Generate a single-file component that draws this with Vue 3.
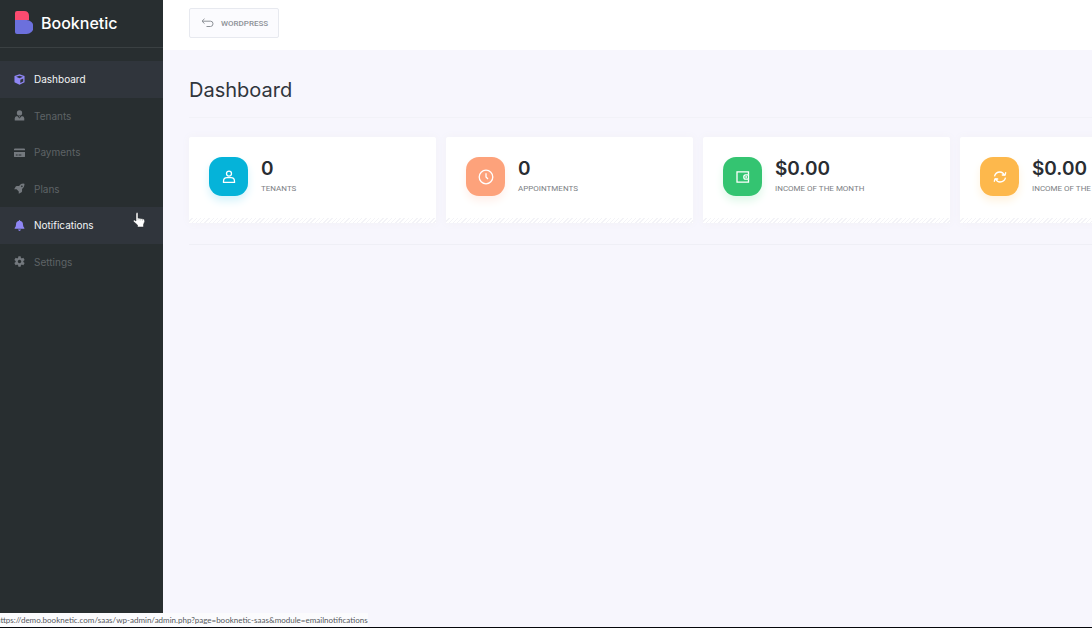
<script setup>
const nav = [
  { id: 'dashboard', label: 'Dashboard', active: true },
  { id: 'tenants', label: 'Tenants' },
  { id: 'payments', label: 'Payments' },
  { id: 'plans', label: 'Plans' },
  { id: 'notifications', label: 'Notifications', active: true },
  { id: 'settings', label: 'Settings' },
]
const cards = [
  { id: 'tenants', value: '0', label: 'TENANTS' },
  { id: 'appointments', value: '0', label: 'APPOINTMENTS' },
  { id: 'month', value: '$0.00', label: 'INCOME OF THE MONTH' },
  { id: 'year', value: '$0.00', label: 'INCOME OF THE YEAR' },
]
</script>

<template>
  <div class="app">
    <aside class="sidebar">
      <a class="brand" href="#">
        <svg class="logo" viewBox="0 0 18 23" aria-hidden="true">
          <path d="M0 9V2Q0 0 2 0H9Q14 0 14 5V9Z" fill="#fb4b70" />
          <path d="M0 9H11.500A6.800 6.800 0 0 1 11.500 23H2Q0 23 0 21Z" fill="#6c70dc" />
        </svg>
        <span>Booknetic</span>
      </a>
      <nav class="nav">
        <a v-for="item in nav" :key="item.id" href="#" class="nav-item" :class="{ active: item.active }">
          <svg class="nav-icon" viewBox="0 0 12 12" fill="currentColor" aria-hidden="true">
            <template v-if="item.id === 'dashboard'">
              <path d="M6 .3 11.500 2.300V9L6 11.800.5 9V2.300Z" />
              <path d="M2.300 3.100 6 1.800 9.700 3.100 6 4.600Z" fill="#30353c" />
              <path d="M6.900 6.200 10.100 4.800V8.200L6.900 9.900Z" fill="#30353c" />
            </template>
            <template v-else-if="item.id === 'tenants'">
              <circle cx="6" cy="3.200" r="2.900" />
              <path d="M.8 11.500V9Q.8 6.800 3.500 6.600L6 9.300 8.500 6.600Q11.200 6.800 11.200 9V11.500Z" />
              <path d="M6 6.600 6.800 7.400 6 8.200 5.200 7.400Z" />
            </template>
            <path v-else-if="item.id === 'payments'" fill-rule="evenodd" d="M1 1.500H11Q12 1.500 12 2.500V3.500H0V2.500Q0 1.500 1 1.500ZM0 5.500H12V10Q12 11 11 11H1Q0 11 0 10ZM2 8.300V9.200H4V8.300ZM5 8.300V9.200H8V8.300Z" />
            <path v-else-if="item.id === 'plans'" fill-rule="evenodd" d="M11.300.8Q8-.1 5.500 3.200H3Q2.300 3.200 1.900 3.800L.2 6.800H2.800L5.200 9.200V11.800L8.200 10.100Q8.800 9.700 8.800 9V6.500Q12 4.200 11.300.8ZM8.600 2.600A.9.900 0 1 1 8.590 2.600Z" />
            <path v-else-if="item.id === 'notifications'" d="M5.500 0H6.500V.9Q9.800 1.500 9.800 5Q9.800 7.500 11.300 8.600V9.600H.7V8.600Q2.200 7.500 2.200 5Q2.200 1.500 5.500.9ZM4.400 10.300H7.600Q7.200 11.900 6 11.900T4.400 10.300Z" />
            <path v-else fill-rule="evenodd" d="M4.800.4H7.200L7.500 2 8.500 2.700 10.200 2 11.600 4.400 10.200 5.400V6.600L11.600 7.600 10.200 10 8.500 9.300 7.500 10 7.200 11.600H4.800L4.500 10 3.500 9.300 1.800 10 .4 7.600 1.800 6.600V5.400L.4 4.400 1.800 2 3.500 2.700 4.500 2ZM6 4.100A1.900 1.900 0 1 0 6.010 4.100Z" />
          </svg>
          <span>{{ item.label }}</span>
        </a>
      </nav>
    </aside>

    <main class="main">
      <header class="topbar">
        <button class="back" type="button">
          <svg class="back-icon" viewBox="0 0 13 10" fill="none" stroke="currentColor" aria-hidden="true">
            <path d="M3.500.8 1 3.200 3.500 5.600M1 3.200H9.500Q12 3.200 12 5.800T9.500 8.500H5.500" />
          </svg>
          WORDPRESS
        </button>
      </header>
      <section class="content">
        <h1>Dashboard</h1>
        <div class="cards">
          <article v-for="card in cards" :key="card.id" class="card">
            <div class="tile" :class="card.id">
              <svg viewBox="0 0 16 16" fill="none" stroke="#fff" stroke-width="1.300" aria-hidden="true">
                <template v-if="card.id === 'tenants'">
                  <circle cx="8" cy="4.600" r="2.500" />
                  <path d="M2.500 13.300V12.300Q2.500 8.700 6 8.700H10Q13.500 8.700 13.500 12.300V13.300Z" />
                </template>
                <template v-else-if="card.id === 'appointments'">
                  <circle cx="8" cy="8" r="6.800" />
                  <path d="M8 4.200V8L10 10" />
                </template>
                <template v-else-if="card.id === 'month'">
                  <path d="M13.500 5.500V2.800H2V13.200H13.500V10.500" />
                  <path d="M13.500 5.800H10.500Q8.800 5.800 8.800 8T10.500 10.200H13.500Z" />
                  <circle cx="11.200" cy="8" r=".3" />
                </template>
                <template v-else>
                  <path d="M2.500 7.300Q3.500 3 8 3 11 3 12.500 6.500M13.500 8.700Q12.500 13 8 13 5 13 3.500 9.500" />
                  <path d="M9.800 6H13M13.800 3.300 12.900 6.500M6.200 10H3M2.200 12.700 3.100 9.500" />
                </template>
              </svg>
            </div>
            <div class="stat">
              <strong>{{ card.value }}</strong>
              <span>{{ card.label }}</span>
            </div>
          </article>
        </div>
      </section>
    </main>

    <svg class="pointer" viewBox="0 0 12 16" aria-hidden="true">
      <path d="M3 1Q4.500 0 5 1.500V6L10.500 7Q12 7.500 11.700 9.500L10.500 12.500V15H4.500V13L.5 9.500Q0 8 1.300 8L3 9Z" fill="#fff" stroke="#20272a" stroke-width=".5" />
      <path d="M5 6V8.200M7.200 6.500V8.500M9.400 6.900V8.800" stroke="#8b9092" stroke-width=".5" />
    </svg>
    <div class="status">https://demo.booknetic.com/saas/wp-admin/admin.php?page=booknetic-saas&amp;module=emailnotifications</div>
  </div>
</template>

<style>
body {
  margin: 0;
  overflow: hidden;
}
</style>

<style scoped>
* {
  box-sizing: border-box;
}
.app {
  position: relative;
  display: flex;
  min-height: 100vh;
  overflow: hidden;
  border-bottom: 1px solid #05070b;
  background: #f7f6fd;
  font-family: Inter, "Open Sans", sans-serif;
}
.sidebar {
  flex: 0 0 163px;
  background: #282e30;
}
.brand {
  display: flex;
  align-items: center;
  gap: 8px;
  height: 48px;
  padding: 0 0 2px 15px;
  border-bottom: 1px solid #3a4042;
  color: #fff;
  font-size: 16px;
  font-weight: 500;
  text-decoration: none;
}
.logo {
  width: 18px;
  height: 23px;
}
.nav {
  display: grid;
  grid-template-rows: repeat(6, 1fr);
  height: 232px;
  padding-top: 13px;
}
.nav-item {
  display: flex;
  align-items: center;
  gap: 9px;
  padding-left: 14px;
  color: #5e6366;
  font-size: 10px;
  text-decoration: none;
}
.nav-item.active {
  background: #30353c;
  color: #f4f5f7;
}
.nav-icon {
  width: 11px;
  height: 11px;
  color: #74797e;
}
.active .nav-icon {
  color: #8f86f5;
}
.main {
  flex: 1;
  min-width: 0;
}
.topbar {
  display: flex;
  align-items: flex-start;
  height: 50px;
  padding: 8px 26px;
  background: #fff;
}
.back {
  display: flex;
  align-items: center;
  gap: 7px;
  height: 30px;
  padding: 0 10px 0 11px;
  border: 1px solid #e7e9ef;
  border-radius: 2px;
  background: #fbfbfe;
  color: #8c9096;
  font-family: Roboto, sans-serif;
  font-size: 8px;
  font-weight: 500;
}
.back-icon {
  width: 13px;
  height: 10px;
}
.content {
  padding: 26px 0 0 26px;
}
h1 {
  margin: 0;
  padding-bottom: 13px;
  border-bottom: 1px solid #f2f2f8;
  color: #30353c;
  font-size: 20px;
  font-weight: 400;
  line-height: 28px;
}
.cards {
  display: grid;
  grid-template-columns: repeat(4, minmax(247px, 1fr));
  gap: 10px;
  padding: 19px 0 21px;
  border-bottom: 1px solid #efeff6;
}
.card {
  position: relative;
  display: flex;
  gap: 13px;
  height: 86px;
  padding: 20px;
  border-radius: 2px;
  background: #fff;
  box-shadow: 0 0 8px #f2f1f7;
}
.card::after {
  position: absolute;
  right: 0;
  bottom: 0;
  left: 0;
  height: 5px;
  background: repeating-linear-gradient(135deg, #fff 0 2px, #f3f3f7 2px 3px);
  content: "";
}
.tile {
  display: flex;
  align-items: center;
  justify-content: center;
  width: 39px;
  height: 39px;
  border-radius: 13px;
}
.tile svg {
  width: 16px;
  height: 16px;
}
.tile.tenants {
  background: #05b3d9;
  box-shadow: 0 5px 9px #d5f3fb;
}
.tile.appointments {
  background: #fda27b;
  box-shadow: 0 5px 9px #fff0ea;
}
.tile.month {
  background: #34c471;
  box-shadow: 0 5px 9px #dff8e9;
}
.tile.year {
  background: #fdb84c;
  box-shadow: 0 5px 9px #fff3df;
}
.stat {
  display: flex;
  flex-direction: column;
  white-space: nowrap;
}
.stat strong {
  color: #292d32;
  font-size: 19px;
  font-weight: 600;
  line-height: 24px;
}
.stat span {
  color: #7c8084;
  font-family: Roboto, sans-serif;
  font-size: 8px;
  line-height: 16px;
}
.pointer {
  position: absolute;
  top: 212px;
  left: 133px;
  width: 12px;
  height: 16px;
}
.status {
  position: absolute;
  bottom: 0;
  left: 0;
  overflow: hidden;
  background: #fbfbfd;
  color: #55585c;
  font-family: Lato, "Open Sans", sans-serif;
  font-size: 8px;
  line-height: 14px;
  text-indent: -4px;
  white-space: nowrap;
}
</style>
